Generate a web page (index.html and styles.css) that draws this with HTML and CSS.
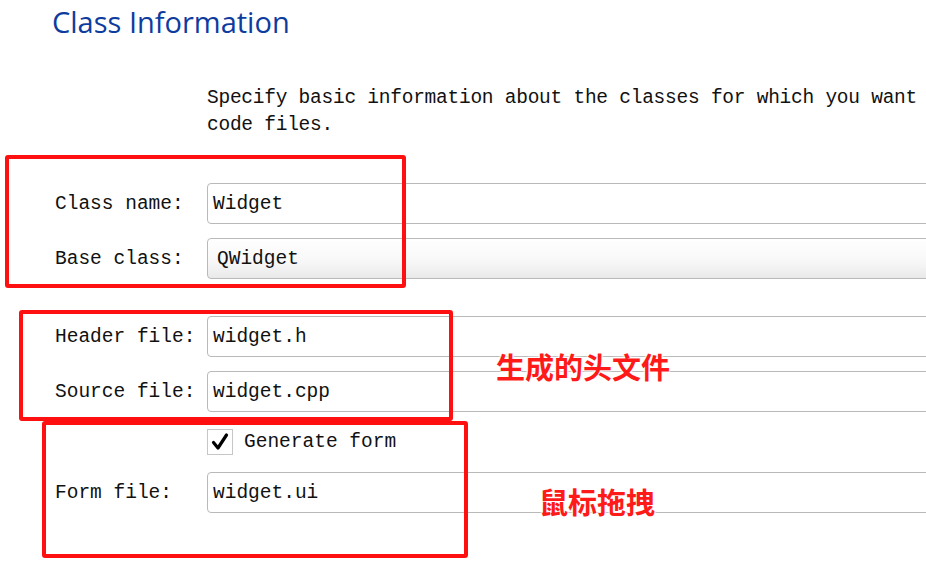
FILE: index.html
```html
<!DOCTYPE html>
<html>
<head>
<meta charset="utf-8">
<link rel="stylesheet" href="styles.css">
</head>
<body>
<div class="page">
  <h1 class="title">Class Information</h1>
  <p class="desc">Specify basic information about the classes for which you want<br>code files.</p>

  <div class="form">
    <div class="group g1">
      <label class="lbl">Class name:</label>
      <div class="field">Widget</div>
      <label class="lbl">Base class:</label>
      <div class="field combo">QWidget</div>
    </div>
    <div class="group g2">
      <label class="lbl">Header file:</label>
      <div class="field">widget.h</div>
      <label class="lbl">Source file:</label>
      <div class="field">widget.cpp</div>
    </div>
    <div class="group g3">
      <span></span>
      <div class="check">
        <span class="box"><svg width="20" height="20" viewBox="0 0 20 20"><path d="M3.5 10.5 L8 16 L16.5 3" fill="none" stroke="#000" stroke-width="3.2" stroke-linecap="round" stroke-linejoin="round"/></svg></span>
        <span>Generate form</span>
      </div>
      <label class="lbl">Form file:</label>
      <div class="field">widget.ui</div>
    </div>
  </div>

  <div class="mark m1"></div>
  <div class="mark m2"></div>
  <div class="mark m3"></div>
  <div class="note n1">生成的头文件</div>
  <div class="note n2">鼠标拖拽</div>
</div>
</body>
</html>
```
FILE: styles.css
```css
html, body {
  margin: 0;
  padding: 0;
  background: #ffffff;
  overflow: hidden;
}
.page {
  position: relative;
  width: 926px;
  height: 567px;
  overflow: hidden;
  font-family: "Liberation Mono", monospace;
  font-size: 19.5px;
  color: #111111;
}
.title {
  margin: 0;
  padding: 2px 0 0 52px;
  font-family: "Open Sans", "Noto Sans", sans-serif;
  font-weight: 400;
  font-size: 29px;
  line-height: 40px;
  color: #0d3c9e;
}
.desc {
  margin: 43px 0 0 207px;
  line-height: 27px;
  white-space: nowrap;
  letter-spacing: -0.25px;
}
.form {
  margin-top: 44px;
  padding-left: 55px;
  display: flex;
  flex-direction: column;
}
.group {
  display: grid;
  grid-template-columns: 152px 800px;
  align-items: center;
}
.g1 { row-gap: 14px; }
.g2 { row-gap: 14px; margin-top: 37px; }
.g3 { row-gap: 17px; margin-top: 17px; }
.lbl {
  white-space: nowrap;
}
.field {
  box-sizing: border-box;
  height: 41px;
  border: 1.5px solid #b9b9b9;
  border-radius: 4px;
  padding-left: 5px;
  display: flex;
  align-items: center;
  background: #ffffff;
  white-space: nowrap;
}
.combo {
  background: linear-gradient(#ffffff 0%, #f7f7f7 60%, #e9e9e9 100%);
  padding-left: 9px;
}
.check {
  display: flex;
  align-items: center;
  gap: 11px;
  height: 26px;
}
.box {
  box-sizing: border-box;
  width: 26px;
  height: 26px;
  border: 1.5px solid #c6c6c6;
  display: flex;
  align-items: center;
  justify-content: center;
  background: #fff;
}
.mark {
  position: absolute;
  box-sizing: border-box;
  border: 4px solid #ff1010;
  border-radius: 3px;
}
.m1 { left: 5px; top: 155px; width: 401px; height: 133px; }
.m2 { left: 19px; top: 310px; width: 434px; height: 111px; }
.m3 { left: 42px; top: 421px; width: 426px; height: 137px; }
.note {
  position: absolute;
  font-family: "Noto Sans CJK SC", sans-serif;
  font-weight: 700;
  font-size: 29px;
  line-height: 29px;
  color: #ff1a1a;
  text-shadow: 0 0 2px #fff, 0 0 2px #fff, 0 0 3px #fff, 0 0 3px #fff;
  white-space: nowrap;
}
.n1 { left: 496px; top: 352px; }
.n2 { left: 539px; top: 487px; }
```
